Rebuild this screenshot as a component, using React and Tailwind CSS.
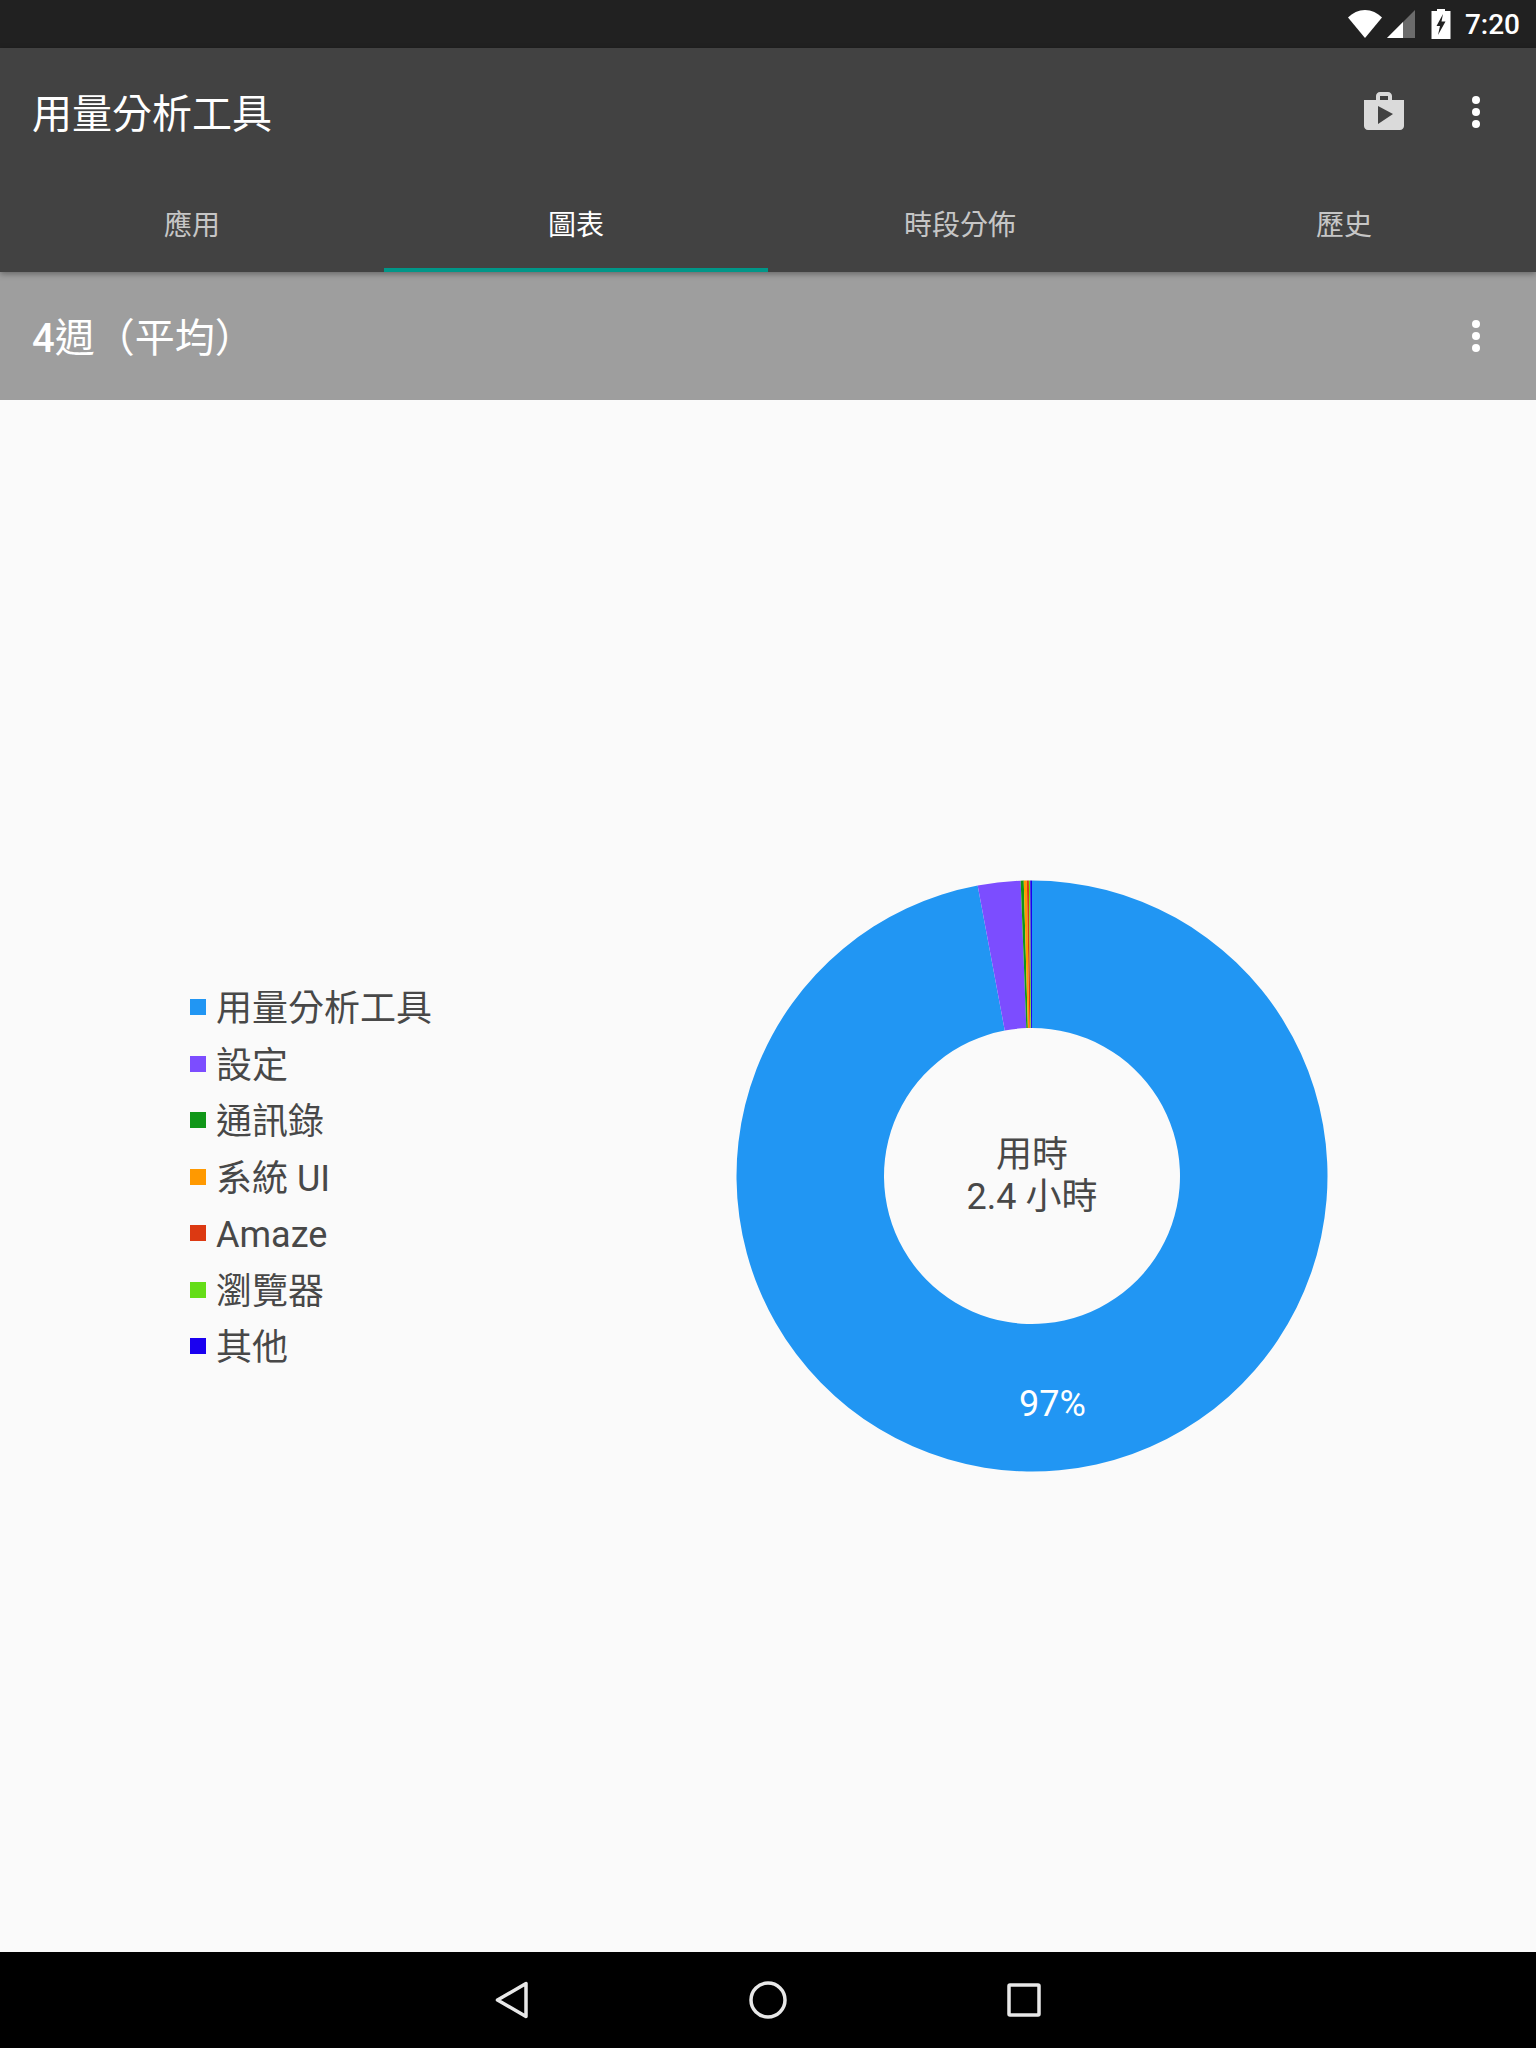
import React from "react";

const slices = [
  { color: "#2196F3", from: 0, to: 349.4 },
  { color: "#7C4DFF", from: 349.4, to: 357.8 },
  { color: "#109618", from: 357.8, to: 358.4 },
  { color: "#FF9900", from: 358.4, to: 359 },
  { color: "#DC3912", from: 359, to: 359.4 },
  { color: "#64DD17", from: 359.4, to: 359.65 },
  { color: "#1A00F0", from: 359.65, to: 360 },
];

const legend = [
  { label: "用量分析工具", color: "bg-[#2196F3]" },
  { label: "設定", color: "bg-[#7C4DFF]" },
  { label: "通訊錄", color: "bg-[#109618]" },
  { label: "系統 UI", color: "bg-[#FF9900]" },
  { label: "Amaze", color: "bg-[#DC3912]" },
  { label: "瀏覽器", color: "bg-[#64DD17]" },
  { label: "其他", color: "bg-[#1A00F0]" },
];

const tabs = ["應用", "圖表", "時段分佈", "歷史"];

const point = (r, deg) => {
  const a = (deg * Math.PI) / 180;
  return `${296 + r * Math.sin(a)} ${296 - r * Math.cos(a)}`;
};

const slicePath = (from, to) => {
  const large = to - from > 180 ? 1 : 0;
  return `M${point(295.5, from)} A295.5 295.5 0 ${large} 1 ${point(295.5, to)} L${point(148, to)} A148 148 0 ${large} 0 ${point(148, from)} Z`;
};

const Dots = () => (
  <svg width="48" height="48" viewBox="0 0 24 24" fill="#fff">
    <circle cx="12" cy="6" r="2" />
    <circle cx="12" cy="12" r="2" />
    <circle cx="12" cy="18" r="2" />
  </svg>
);

const StatusBar = () => (
  <div className="h-12 bg-[#212121] flex items-center justify-end">
    <svg width="36" height="30" viewBox="0 0 36 30" className="mr-[3px]" fill="#fff">
      <path d="M1 8.500C5.500 4 11.500 1 18 1s12.500 3 17 7.500L18 29Z" />
    </svg>
    <svg width="30" height="30" viewBox="0 0 30 30" className="mr-[15px]">
      <path d="M29 1v28H1Z" fill="#6b6b6b" />
      <path d="M17 13v16H1Z" fill="#fff" />
    </svg>
    <svg width="20" height="30" viewBox="0 0 20 30" className="mr-[14px]">
      <path d="M6 0h8v2h5.500v28H.5V2H6Z" fill="#fff" />
      <path d="M12 5 5.500 17h3.500l-2 9 7.500-13.500h-4Z" fill="#212121" />
    </svg>
    <span className="text-[28px] leading-none font-medium text-white mr-[16px] pt-px">7:20</span>
  </div>
);

const TopBar = () => (
  <div className="bg-[#424242] relative z-10 shadow-[0_2px_6px_rgba(0,0,0,0.35)]">
    <div className="h-32 flex items-center pl-8 pr-[36px]">
      <h1 className="flex-1 text-[40px] font-normal text-white pt-[5px]">用量分析工具</h1>
      <svg width="48" height="48" viewBox="0 0 24 24" fill="#DADADA" className="mr-[44px]">
        <path d="M16 6V4c0-1.110-.890-2-2-2h-4c-1.110 0-2 .890-2 2v2H2v13c0 1.110.890 2 2 2h16c1.110 0 2-.890 2-2V6h-6zm-6-2h4v2h-4V4zM9 18V9l7.500 4L9 18z" />
      </svg>
      <Dots />
    </div>
    <div className="grid grid-cols-4 h-24">
      {tabs.map((t) => {
        const active = t === "圖表";
        return (
          <div
            key={t}
            className={`flex items-center justify-center text-[28px] border-b-4 ${
              active ? "text-white border-[#009688]" : "text-[#c6c6c6] border-transparent"
            }`}
          >
            <span className="pt-[7px]">{t}</span>
          </div>
        );
      })}
    </div>
  </div>
);

const SectionBar = () => (
  <div className="h-32 bg-[#9E9E9E] flex items-center pl-8 pr-[36px]">
    <span className="flex-1 text-[40px] text-white pt-[5px]">
      <span className="font-medium">4</span>週（平均）
    </span>
    <Dots />
  </div>
);

const Legend = () => (
  <div className="w-[528px] shrink-0 pl-[190px] mt-[1.5px] flex flex-col">
    {legend.map((l) => (
      <div key={l.label} className="h-[56.5px] flex items-center gap-[10px] text-[36px] text-[#484848]">
        <span className={`w-4 h-4 ${l.color}`} />
        <span className="leading-none pt-[4px]">{l.label}</span>
      </div>
    ))}
  </div>
);

const Donut = () => (
  <div className="flex-1 flex items-center justify-center">
    <div className="relative w-[592px] h-[592px]">
      <svg width="592" height="592" viewBox="0 0 592 592">
        {slices.map((s) => (
          <path key={s.color} d={slicePath(s.from, s.to)} fill={s.color} />
        ))}
      </svg>
      <div className="absolute inset-0 flex flex-col items-center justify-center text-[#484848] text-[36px] leading-[42px]">
        <span>用時</span>
        <span>2.4 小時</span>
      </div>
      <span className="absolute left-[283px] top-[506px] text-[36px] leading-none text-white">97%</span>
    </div>
  </div>
);

const NavBar = () => (
  <div className="h-24 bg-black flex items-center justify-center gap-[220px]">
    <svg width="34" height="38" viewBox="0 0 34 38" fill="none" stroke="#E8E8E8" strokeWidth="3.500" strokeLinejoin="round">
      <path d="M31 2.500V35.500L2.500 19Z" />
    </svg>
    <svg width="38" height="38" viewBox="0 0 38 38" fill="none" stroke="#E8E8E8" strokeWidth="3.500">
      <circle cx="19" cy="19" r="17" />
    </svg>
    <svg width="34" height="34" viewBox="0 0 34 34" fill="none" stroke="#E8E8E8" strokeWidth="3.500" strokeLinejoin="round">
      <rect x="2" y="2" width="30" height="30" rx="1" />
    </svg>
  </div>
);

export default function App() {
  return (
    <div className="w-[1536px] h-[2048px] flex flex-col bg-[#FAFAFA] font-['Roboto','Noto_Sans_CJK_TC',sans-serif]">
      <StatusBar />
      <TopBar />
      <SectionBar />
      <div className="flex-1 flex items-center">
        <Legend />
        <Donut />
      </div>
      <NavBar />
    </div>
  );
}
